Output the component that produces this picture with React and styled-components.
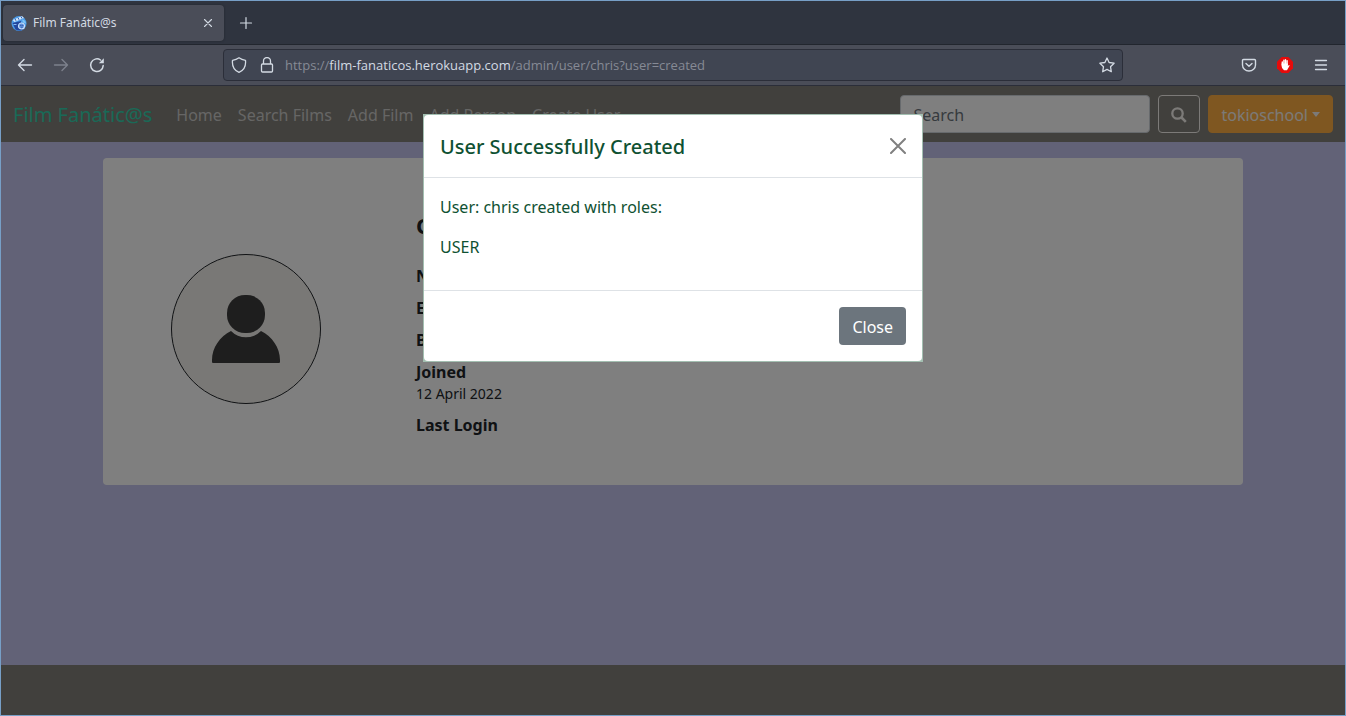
import React from "react";
import styled, { createGlobalStyle } from "styled-components";

const GlobalStyle = createGlobalStyle`
  *, *::before, *::after { box-sizing: border-box; }
  html, body, #root { height: 100%; }
  body {
    margin: 0;
    font-family: "Noto Sans", sans-serif;
    font-size: 16px;
    line-height: 24px;
    color: #212529;
  }
  button, input { font: inherit; margin: 0; }
  h1, h2, p, dl, dd { margin: 0; }
  svg { display: block; }
`;

const Window = styled.div`
  display: flex;
  flex-direction: column;
  min-height: 100vh;
  border: 1px solid #779fc7;
`;

const TabStrip = styled.div`
  display: flex;
  align-items: center;
  gap: 12px;
  height: 44px;
  padding: 0 2px;
  background: #2f343f;
  border-bottom: 1px solid #22262e;
`;

const Tab = styled.div`
  display: flex;
  align-items: center;
  gap: 6px;
  width: 221px;
  height: 36px;
  padding: 0 7px 0 8px;
  border-radius: 4px;
  background: #4a4d58;
  color: #d3dae3;
  font-size: 12px;
  line-height: 16px;
  box-shadow: 0 0 2px #20242c;
`;

const TabTitle = styled.span`
  flex: 1;
`;

const IconButton = styled.button`
  display: grid;
  place-items: center;
  width: ${(p) => p.$size || 20}px;
  height: ${(p) => p.$size || 20}px;
  padding: 0;
  border: 0;
  background: none;
  color: #d3dae3;

  &:disabled { color: #7d818c; }
`;

const ToolBar = styled.div`
  display: flex;
  align-items: center;
  justify-content: space-between;
  height: 41px;
  padding: 0 14px;
  background: #4a4d58;
  border-bottom: 1px solid #2b2e39;
`;

const ToolGroup = styled.div`
  display: flex;
  flex: 1 1 0;
  gap: 16px;
  justify-content: ${(p) => (p.$end ? "flex-end" : "flex-start")};
`;

const AddressBar = styled.div`
  display: flex;
  align-items: center;
  gap: 8px;
  flex: 0 1 900px;
  height: 32px;
  padding: 0 5px;
  border: 1px solid #2b2e39;
  border-radius: 4px;
  background: #404552;
`;

const Address = styled.a`
  flex: 1;
  color: #868a95;
  font-family: "Open Sans", "Noto Sans", sans-serif;
  font-size: 13px;
  line-height: 18px;
  text-decoration: none;

  strong { font-weight: 400; color: #d3dae3; }
`;

const Viewport = styled.div`
  position: relative;
  display: flex;
  flex-direction: column;
  flex: 1;
  background: #c4c4ee;
`;

const NavBar = styled.nav`
  display: flex;
  align-items: center;
  height: 56px;
  padding: 0 12px;
  background: #82807a;
`;

const Brand = styled.a`
  margin-right: 16px;
  padding-top: 2px;
  color: #34d3ae;
  font-size: 20px;
  line-height: 30px;
  text-decoration: none;
`;

const NavLinks = styled.div`
  display: flex;
  flex: 1;
`;

const NavLink = styled.a`
  padding: 10px 8px 8px;
  color: #cdccca;
  text-decoration: none;
`;

const SearchForm = styled.form`
  display: flex;
  gap: 8px;
`;

const SearchInput = styled.input`
  width: 250px;
  height: 38px;
  padding: 8px 12px 6px;
  border: 1px solid #ced4da;
  border-radius: 4px;
  background: #fff;

  &::placeholder { color: #6c757d; opacity: 1; }
`;

const NavButton = styled.button`
  display: flex;
  align-items: center;
  gap: 4px;
  height: 38px;
  padding: 2px 12px 0;
  border: 1px solid ${(p) => (p.$filled ? "#feae42" : "#f8f5f0")};
  border-radius: 4px;
  background: ${(p) => (p.$filled ? "#feae42" : "transparent")};
  color: #f8f5f0;
`;

const Caret = styled.span`
  margin-bottom: 2px;
  border: 4px solid transparent;
  border-top: 5px solid currentColor;
  border-bottom: 0;
`;

const Content = styled.main`
  flex: 1;
  width: 100%;
  max-width: 1164px;
  margin: 0 auto;
  padding: 16px 12px;
`;

const ProfileCard = styled.section`
  display: grid;
  grid-template-columns: 285px 1fr;
  gap: 28px;
  align-items: center;
  padding: 48px 0;
  border-radius: 4px;
  background: #fff;
`;

const Avatar = styled.div`
  display: grid;
  place-items: center;
  justify-self: center;
  width: 150px;
  height: 150px;
  margin-top: 14px;
  border: 1px solid #212529;
  border-radius: 50%;
  background: #f3f1ed;
`;

const UserName = styled.h1`
  margin: 6px 0 26px;
  font-size: 22px;
  line-height: 26px;
  font-weight: 700;
`;

const Details = styled.dl`
  display: flex;
  flex-direction: column;
  gap: 8px;

  dt { font-weight: 700; }
  dd { padding-bottom: 2px; font-size: 14px; line-height: 19px; }
`;

const PageFooter = styled.footer`
  height: 50px;
  background: #82807a;
`;

const Backdrop = styled.div`
  position: absolute;
  inset: 0;
  display: flex;
  justify-content: center;
  align-items: flex-start;
  padding: 28px 0;
  background: rgba(0, 0, 0, 0.5);
`;

const Dialog = styled.section`
  width: 500px;
  padding: 1px;
  background: #a3bfb1;
  color: #0f5132;
`;

const DialogPanel = styled.div`
  border-radius: 4px;
  background: #fff;
`;

const DialogHeader = styled.header`
  display: flex;
  align-items: center;
  justify-content: space-between;
  padding: 16px;
  border-bottom: 1px solid #dee2e6;

  h2 { padding-top: 2px; font-size: 20px; line-height: 28px; font-weight: 500; }
`;

const DialogBody = styled.div`
  padding: 16px;

  p { margin-bottom: 14px; line-height: 26px; }
`;

const DialogFooter = styled.footer`
  display: flex;
  justify-content: flex-end;
  padding: 16px;
  border-top: 1px solid #dee2e6;
`;

const CloseButton = styled.button`
  height: 38px;
  padding: 2px 13px 0;
  border: 0;
  border-radius: 4px;
  background: #6c757d;
  color: #fff;
`;

const Line = ({ size = 16, d, width = 1.2, children }) => (
  <svg width={size} height={size} viewBox="0 0 16 16" fill="none" stroke="currentColor" strokeWidth={width} strokeLinecap="round" strokeLinejoin="round" aria-hidden="true">
    {d && <path d={d} />}
    {children}
  </svg>
);

const Favicon = () => (
  <svg width="16" height="16" viewBox="0 0 16 16" aria-hidden="true">
    <circle cx="8" cy="8.5" r="7.5" fill="#4a9be8" />
    <path d="M1.500 8 10 6v2l4 1v3.500a7 7 0 0 1-9.500 2Z" fill="#24479c" />
    <path d="m1.500 5 9.500-4 2 2-9.500 4Z" fill="#cfe6fb" />
    <path d="m4 3.800 1 2M7 2.700l1 2M10 1.500l1 2" stroke="#2d5bb0" />
    <path d="M11 4.500c2 0 3.500 1.500 4 4l-3-1Z" fill="#7cc4f7" />
    <circle cx="10.5" cy="11" r="3" fill="#5d8fdb" stroke="#c8e0fc" strokeWidth="1.2" />
    <path d="M9.500 10.500h.8M11.500 10.500h.8M10.500 12.300h.8" stroke="#203f91" />
    <path d="M2.500 9.500h3" stroke="#89baf2" />
  </svg>
);

const Person = () => (
  <svg width="70" height="70" viewBox="0 0 70 70" fill="#3c3c3c" aria-hidden="true">
    <rect x="16" y="1" width="38" height="38" rx="18" />
    <path d="M20 37a21 21 0 0 0 30 0c11 5 19 17 19 29v2q0 1-1 1H2q-1 0-1-1v-2c0-12 8-24 19-29Z" />
  </svg>
);

export default function App() {
  return (
    <>
      <GlobalStyle />
      <Window>
        <TabStrip>
          <Tab>
            <Favicon />
            <TabTitle>Film Fanátic@s</TabTitle>
            <IconButton $size={18} aria-label="Close tab">
              <Line width={1.1} d="m4.500 4.500 7 7m0-7-7 7" />
            </IconButton>
          </Tab>
          <IconButton aria-label="New tab">
            <Line d="M8 2.500v11M2.500 8h11" />
          </IconButton>
        </TabStrip>
        <ToolBar>
          <ToolGroup>
            <IconButton aria-label="Back">
              <Line width={1.4} d="M1.500 8h13M7 2.500 1.500 8 7 13.500" />
            </IconButton>
            <IconButton disabled aria-label="Forward">
              <Line width={1.4} d="M1.500 8h13M9 2.500 14.500 8 9 13.500" />
            </IconButton>
            <IconButton aria-label="Reload">
              <Line width={1.5} d="M14.2 8.600A6.300 6.300 0 1 1 11.500 3">
                <path d="M14.800 1.300v5h-5Z" fill="currentColor" stroke="none" />
              </Line>
            </IconButton>
          </ToolGroup>
          <AddressBar>
            <IconButton aria-label="Tracking protection">
              <Line width={1.3} d="M8 .8c2 1.500 4.200 2.200 6.500 2.500.5 5-1.500 10-6.500 12C3 13.300 1 8.300 1.500 3.300 3.800 3 6 2.300 8 .8Z" />
            </IconButton>
            <IconButton aria-label="Connection secure">
              <Line width={1.3} d="M4.500 7V4a3.500 3.500 0 0 1 7 0v3M3.500 7h9q1 0 1 1v6q0 1-1 1h-9q-1 0-1-1V8q0-1 1-1Z" />
            </IconButton>
            <Address href="#">https://<strong>film-fanaticos.herokuapp.com</strong>/admin/user/chris?user=created</Address>
            <IconButton aria-label="Bookmark">
              <Line width={1.3} d="m8 1 2.100 4.500 5 .7-3.600 3.500.8 5L8 12.400l-4.300 2.300.8-5L.9 6.200l5-.7Z" />
            </IconButton>
          </AddressBar>
          <ToolGroup $end>
            <IconButton aria-label="Save to Pocket">
              <Line width={1.4} d="M2.500 2.500h11q1 0 1 1V8a6.500 6 0 0 1-13 0V3.500q0-1 1-1ZM5 6.500l3 2.800 3-2.800" />
            </IconButton>
            <IconButton aria-label="Ad blocker">
              <svg width="16" height="16" viewBox="0 0 16 16" aria-hidden="true">
                <path d="M4.700 0h6.600L16 4.700v6.600L11.300 16H4.700L0 11.300V4.700Z" fill="#e60b0b" />
                <path d="M5.300 8V5M6.900 7V3.200M8.500 7V2.800M10.100 8V3.800" stroke="#fff" strokeWidth="1.400" strokeLinecap="round" />
                <path d="M4.600 6.500h6.200V9l1.200-1 .7.600-2.400 4.200q-.3.500-1 .500H7Q4.600 11.800 4.600 9Z" fill="#fff" />
              </svg>
            </IconButton>
            <IconButton aria-label="Menu">
              <Line width={1.3} d="M2.500 3.500h11M2.500 8h11M2.500 12.500h11" />
            </IconButton>
          </ToolGroup>
        </ToolBar>
        <Viewport>
          <NavBar>
            <Brand href="#">Film Fanátic@s</Brand>
            <NavLinks>
              {["Home", "Search Films", "Add Film", "Add Person", "Create User"].map((label) => (
                <NavLink key={label} href="#">{label}</NavLink>
              ))}
            </NavLinks>
            <SearchForm>
              <SearchInput type="search" placeholder="Search" aria-label="Search" />
              <NavButton type="button" aria-label="Search films">
                <svg width="16" height="16" viewBox="0 0 16 16" fill="none" stroke="currentColor" aria-hidden="true">
                  <circle cx="6.500" cy="6.500" r="5.200" strokeWidth="2.300" />
                  <path d="m10.500 10.500 4.300 4.300" strokeWidth="2.600" />
                </svg>
              </NavButton>
              <NavButton type="button" $filled>
                tokioschool
                <Caret />
              </NavButton>
            </SearchForm>
          </NavBar>
          <Content>
            <ProfileCard>
              <Avatar>
                <Person />
              </Avatar>
              <div>
                <UserName>Chris</UserName>
                <Details>
                  <dt>Name</dt>
                  <dt>Email</dt>
                  <dt>Birthday</dt>
                  <div>
                    <dt>Joined</dt>
                    <dd>12 April 2022</dd>
                  </div>
                  <dt>Last Login</dt>
                </Details>
              </div>
            </ProfileCard>
          </Content>
          <PageFooter />
          <Backdrop>
            <Dialog role="dialog" aria-labelledby="dialog-title">
              <DialogPanel>
                <DialogHeader>
                  <h2 id="dialog-title">User Successfully Created</h2>
                  <IconButton $size={16} aria-label="Close dialog">
                    <svg width="16" height="16" viewBox="0 0 16 16" stroke="#808080" strokeWidth="2" strokeLinecap="round" aria-hidden="true">
                      <path d="m1 1 14 14M15 1 1 15" />
                    </svg>
                  </IconButton>
                </DialogHeader>
                <DialogBody>
                  <p>User: chris created with roles:</p>
                  <p>USER</p>
                </DialogBody>
                <DialogFooter>
                  <CloseButton type="button">Close</CloseButton>
                </DialogFooter>
              </DialogPanel>
            </Dialog>
          </Backdrop>
        </Viewport>
      </Window>
    </>
  );
}
